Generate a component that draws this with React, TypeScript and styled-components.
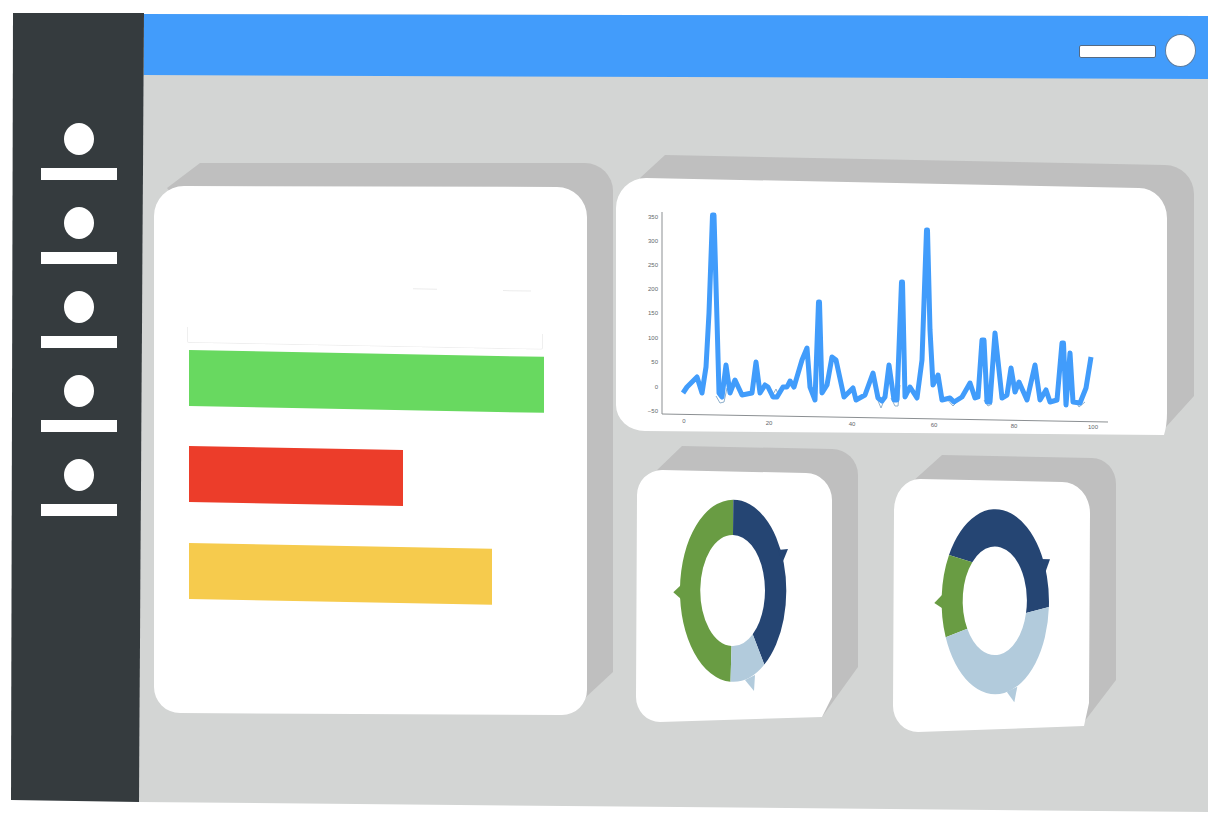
import React from 'react'
import styled, { createGlobalStyle } from 'styled-components'

const GlobalStyle = createGlobalStyle`
  html, body {
    margin: 0;
    padding: 0;
    background: #ffffff;
    font-family: "Liberation Sans", sans-serif;
  }
`;

const Page = styled.div`
  width: 1209px;
  height: 831px;
  overflow: hidden;
  padding: 13px 0 0 11px;
  box-sizing: border-box;
  display: flex;
  align-items: flex-start;
`;

const Sidebar = styled.nav`
  width: 133px;
  height: 789px;
  flex: none;
  position: relative;
  z-index: 1;
  box-sizing: border-box;
  padding: 110px 0 0 30px;
  background: #353b3e;
  clip-path: polygon(2px 0, 100% 0, 128px 100%, 0 787px);
  display: flex;
  flex-direction: column;
  gap: 27px;
`;

const NavItem = styled.div`
  width: 76px;
  display: flex;
  flex-direction: column;
  align-items: center;
  gap: 13px;
`;

const NavDot = styled.div`
  width: 30px;
  height: 32px;
  border-radius: 50%;
  background: #ffffff;
`;

const NavBar = styled.div`
  width: 76px;
  height: 12px;
  background: #ffffff;
`;

const Main = styled.main`
  width: 1069px;
  height: 798px;
  flex: none;
  margin: 1px 0 0 -5px;
  background: #d3d5d4;
  clip-path: polygon(5px 0, 100% 2px, 100% 100%, 0 788px);
`;

const Header = styled.header`
  height: 65px;
  box-sizing: border-box;
  padding: 20px 12px 0 0;
  background: #429cfb;
  clip-path: polygon(0 0, 100% 0, 100% 100%, 0 61px);
  display: flex;
  justify-content: flex-end;
  align-items: flex-start;
  gap: 9px;
`;

const SearchBox = styled.div`
  width: 77px;
  height: 13px;
  margin-top: 11px;
  box-sizing: border-box;
  background: #ffffff;
  border: 1px solid #566a82;
  border-radius: 2px;
`;

const Avatar = styled.div`
  width: 31px;
  height: 33px;
  box-sizing: border-box;
  border-radius: 50%;
  background: #ffffff;
  border: 1px solid #5d7c9e;
`;

const Content = styled.div`
  display: flex;
  align-items: flex-start;
  gap: 2px;
  padding: 76px 0 0 15px;
`;

const Column = styled.div`
  display: flex;
  flex-direction: column;
  gap: 9px;
`;

const DonutRow = styled.div`
  display: flex;
  align-items: flex-start;
  gap: 35px;
  padding-left: 21px;
`;

// the white face and the grey extruded back are both cut from the card box
const Card = styled.section<{ $w: number; $h: number; $top?: number; $face: string; $depth: string }>`
  position: relative;
  isolation: isolate;
  flex: none;
  width: ${p => p.$w}px;
  height: ${p => p.$h}px;
  margin-top: ${p => p.$top || 0}px;

  &::before,
  &::after {
    content: "";
    position: absolute;
    inset: 0;
    z-index: -1;
  }
  &::before {
    background: #bfbfbf;
    clip-path: path("${p => p.$depth}");
  }
  &::after {
    background: #ffffff;
    clip-path: path("${p => p.$face}");
  }
`;

const StatsBody = styled.div`
  padding: 122px 0 0 35px;
`;

const FaintTicks = styled.div`
  display: flex;
  gap: 66px;
  padding-left: 224px;
  transform: skewY(1.1deg);
  transform-origin: left top;
`;

const FaintTick = styled.div<{ $w: number }>`
  width: ${p => p.$w}px;
  height: 1px;
  background: #ececec;
`;

const FaintFrame = styled.div`
  width: 356px;
  height: 16px;
  margin: 42px 0 7px -2px;
  box-sizing: border-box;
  border: 1px solid #efefef;
  border-top: none;
  border-radius: 0 0 2px 2px;
  transform: skewY(1.1deg);
  transform-origin: left top;
`;

const BarList = styled.div`
  display: flex;
  flex-direction: column;
  gap: 40.25px;
`;

const StatBar = styled.div<{ $w: number; $color: string }>`
  width: ${p => p.$w}px;
  height: 56px;
  background: ${p => p.$color};
  transform: skewY(1.1deg);
  transform-origin: left top;
`;

const Drawing = styled.svg`
  display: block;
  width: 100%;
  height: 100%;
`;

const TickLabel = styled.text`
  font-family: "Liberation Sans", sans-serif;
  font-size: 6px;
  fill: #63676b;
`;

const LINE_COLOR = '#419cfb'

const trace =
  '683,393 687,387 692,382 697,377 702,393 706,367 709,313 712.5,215 714,215 717,320 719,393 722,397 726,365 730,393 735,380 742,395 752,393 ' +
  '756,362 760,393 765,385 768,387 773,397 777,397 783,387 787,387 790,381 794,387 802,360 807,348 810,387 815,400 818.5,302 819.5,302 822,393 ' +
  '827,385 832,357 836,360 844,397 853,388 856,400 865,395 873,373 878,398 882,401 885,397 889,365 894,400 897,400 901.5,282 902.5,282 905,397 ' +
  '910,387 917,398 922,360 926.5,230 927.5,230 930,330 933,385 938,375 942,400 950,398 954,402 962,397 970,383 975,398 978,397 982,340 984,340 ' +
  '987,402 990,402 995,333 1002,398 1007,395 1011,368 1015,392 1019,382 1027,400 1035,365 1040,400 1046,390 1050,402 1057,400 1062,343 ' +
  '1063.5,343 1066,405 1070,353 1073,402 1080,403 1086,388 1091,357'

// the thin second series only shows where it dips under the thick one
const ghost =
  '716,396 720,403 724,402 727,388 M 771,398 776,389 779,396 M 876,396 881,408 885,398 M 891,398 895,406 898,406 900,385 ' +
  'M 946,398 953,406 959,400 M 984,400 988,406 992,404 M 1075,400 1079,407 1085,402'

const yTicks = [
  ['350', 219], ['300', 243], ['250', 267], ['200', 291], ['150', 315],
  ['100', 340], ['50', 364], ['0', 389], ['\u221250', 413],
] as const

const xTicks = [
  ['0', 684, 419], ['20', 769, 421], ['40', 852, 422], ['60', 934, 423], ['80', 1014, 424], ['100', 1093, 425],
] as const

const LineChart = () => (
  <Drawing viewBox="615 155 579 282">
    <path d="M662 212 V414 L1108 422" fill="none" stroke="#8b8f92" strokeWidth="1" />
    {yTicks.map(([label, y]) => (
      <TickLabel key={label} x="658" y={y} textAnchor="end">{label}</TickLabel>
    ))}
    {xTicks.map(([label, x, y]) => (
      <TickLabel key={label} x={x} y={y + 4} textAnchor="middle">{label}</TickLabel>
    ))}
    <path d={'M ' + ghost} fill="none" stroke="#8fb0cc" strokeWidth="1" />
    <polyline points={trace} fill="none" stroke={LINE_COLOR} strokeWidth="5" strokeLinejoin="round" />
  </Drawing>
)

const GREEN = '#699c43'
const NAVY = '#254573'
const PALE = '#b2cbdc'

const Donut = ({ box, shapes }: { box: string; shapes: [string, string][] }) => (
  <Drawing viewBox={box}>
    {shapes.map(([fill, d]) => <path key={d} d={d} fill={fill} />)}
  </Drawing>
)

const firstDonut: [string, string][] = [
  [GREEN, 'M733.3 499.8 A53 91 0 0 0 730.5 681.7 L731.5 646 A32 55.5 0 0 1 733 535 Z'],
  [NAVY, 'M733.3 499.8 A53 91 0 0 1 764.3 664.6 L752.7 634.2 A32 55.5 0 0 0 733 535 Z'],
  [PALE, 'M764.3 664.6 A53 91 0 0 1 730.5 681.7 L731.5 646 A32 55.5 0 0 0 752.7 634.2 Z'],
  [NAVY, 'M778 550 L788 549 L782.7 562 Z'],
  [GREEN, 'M681 585 L673.3 592.3 L681 599 Z'],
  [PALE, 'M745 680 L754 691 L755 675 Z'],
]

const secondDonut: [string, string][] = [
  [NAVY, 'M949 554.9 A53.7 92.5 0 0 1 1048.9 607 L1026 613 A32 54 0 0 0 972.3 562.2 Z'],
  [GREEN, 'M949 554.9 A53.7 92.5 0 0 0 945.7 637.2 L967.3 628.7 A32 54 0 0 1 972.3 562.2 Z'],
  [PALE, 'M945.7 637.2 A53.7 92.5 0 0 0 1048.9 607 L1026 613 A32 54 0 0 1 967.3 628.7 Z'],
  [NAVY, 'M1040 559 L1050 559.3 L1045 573.3 Z'],
  [GREEN, 'M942 595 L934.3 603 L942.3 608.3 Z'],
  [PALE, 'M1006.7 691.7 L1014.3 702.3 L1017.3 686.7 Z'],
]

const bars = [
  { w: 355, color: '#68d960' },
  { w: 214, color: '#ec3d2a' },
  { w: 303, color: '#f6cb4d' },
]

export default function App() {
  return (
    <Page>
      <GlobalStyle />
      <Sidebar>
        {[0, 1, 2, 3, 4].map(i => (
          <NavItem key={i}>
            <NavDot />
            <NavBar />
          </NavItem>
        ))}
      </Sidebar>
      <Main>
        <Header>
          <SearchBox />
          <Avatar />
        </Header>
        <Content>
          <Card
            $w={459}
            $h={553}
            $top={7}
            $face="M 0 54 A 30 30 0 0 1 30 24 L 403 25 A 30 30 0 0 1 433 55 L 433 528 A 25 25 0 0 1 408 553 L 26 551 A 26 26 0 0 1 0 525 Z"
            $depth="M 13 26 L 46 1 L 431 1 A 28 28 0 0 1 459 29 L 459 510 L 431 536 Z"
          >
            <StatsBody>
              <FaintTicks>
                <FaintTick $w={24} />
                <FaintTick $w={28} />
              </FaintTicks>
              <FaintFrame />
              <BarList>
                {bars.map(b => <StatBar key={b.color} $w={b.w} $color={b.color} />)}
              </BarList>
            </StatsBody>
          </Card>
          <Column>
            <Card
              $w={579}
              $h={282}
              $face="M 1 53 A 30 30 0 0 1 31 23 L 524 33 A 28 30 0 0 1 552 63 L 552 258 Q 552 270 549 280 L 30 276 A 29 26 0 0 1 1 250 Z"
              $depth="M 25 23 L 50 0 L 550 10 A 29 29 0 0 1 579 39 L 579 241 L 551 272 L 30 262 Z"
            >
              <LineChart />
            </Card>
            <DonutRow>
              <Card
                $w={222}
                $h={276}
                $face="M 1 49 A 25 25 0 0 1 26 24 L 170 27 A 26 27 0 0 1 196 54 L 196 251 L 186 271 L 24 276 A 24 25 0 0 1 0 251 Z"
                $depth="M 19 26 L 46 0 L 196 3 A 26 26 0 0 1 222 29 L 222 221 L 186 271 L 24 270 Z"
              >
                <Donut box="636 446 222 276" shapes={firstDonut} />
              </Card>
              <Card
                $w={223}
                $h={277}
                $top={9}
                $face="M 1 55 A 26 31 0 0 1 27 24 L 169 27 A 28 31 0 0 1 197 58 L 196 248 L 191 271 L 25 277 A 25 26 0 0 1 0 251 Z"
                $depth="M 19 27 L 49 0 L 199 3 A 24 26 0 0 1 223 29 L 223 225 L 191 267 L 27 267 Z"
              >
                <Donut box="893 455 223 277" shapes={secondDonut} />
              </Card>
            </DonutRow>
          </Column>
        </Content>
      </Main>
    </Page>
  )
}
